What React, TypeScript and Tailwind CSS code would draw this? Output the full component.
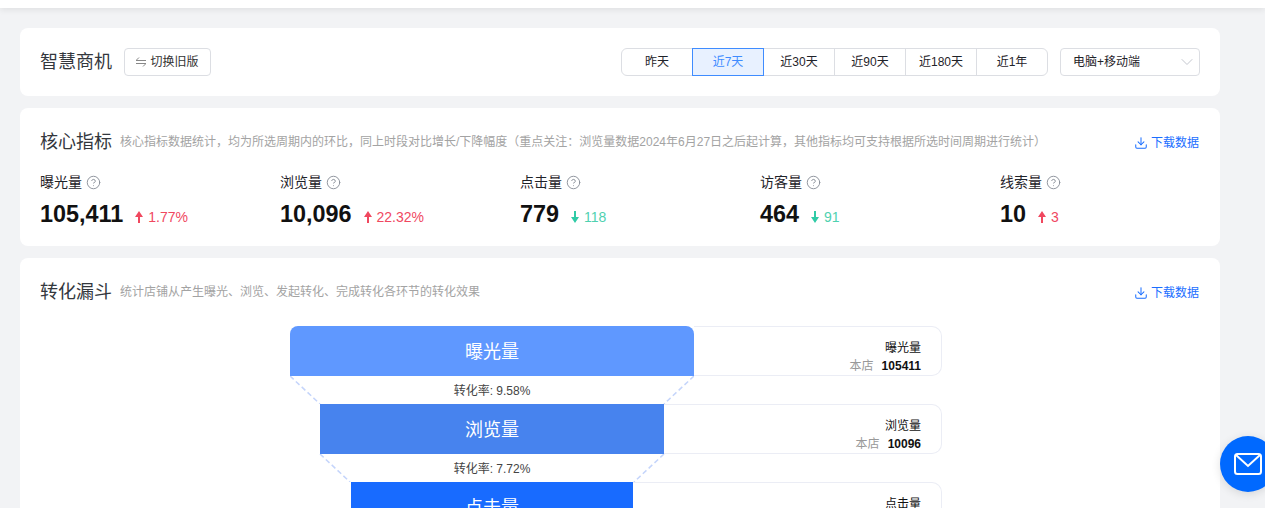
import { ChevronDown, CircleHelp, Download } from 'lucide-react';

const ranges = ['昨天', '近7天', '近30天', '近90天', '近180天', '近1年'];

const metrics = [
  { label: '曝光量', value: '105,411', delta: '1.77%', up: true },
  { label: '浏览量', value: '10,096', delta: '22.32%', up: true },
  { label: '点击量', value: '779', delta: '118', up: false },
  { label: '访客量', value: '464', delta: '91', up: false },
  { label: '线索量', value: '10', delta: '3', up: true },
];

function Arrow({ up }: { up: boolean }) {
  return (
    <svg width="8" height="12" viewBox="0 0 8 12" className={up ? 'text-[#f0485f]' : 'rotate-180 text-[#2fcba6]'}>
      <path d="M4 0 L8 6 H5 V12 H3 V6 H0 Z" fill="currentColor" />
    </svg>
  );
}

function DownloadLink() {
  return (
    <a className="mt-0.5 mr-px flex items-center gap-[3px] text-xs text-[#1a6eff]">
      <Download size={14} strokeWidth={1.75} />
      下载数据
    </a>
  );
}

function CardTitle({ title, desc }: { title: string; desc: string }) {
  return (
    <div className="flex items-center justify-between">
      <div className="flex items-center gap-2">
        <h2 className="text-lg leading-6 font-normal text-[#33373d]">{title}</h2>
        <p className="text-xs text-[#a3a3a3]">{desc}</p>
      </div>
      <DownloadLink />
    </div>
  );
}

function Connector({ rate, inset }: { rate: string; inset: number }) {
  return (
    <div className="relative flex h-7 w-[404px] items-start justify-center pt-[7px] text-xs leading-4 text-[#444444]">
      <svg width="404" height="28" className="absolute top-0 left-0">
        <path d={`M${inset} 0 L${inset + 30} 28 M${404 - inset} 0 L${374 - inset} 28`} stroke="#c5d5fb" strokeWidth="1.5" strokeDasharray="5 3" fill="none" />
      </svg>
      <span className="relative">转化率: {rate}</span>
    </div>
  );
}

function FunnelRow(props: { name: string; store: string; color: string; left: string; width: string; top?: boolean }) {
  return (
    <div className="flex h-[50px] w-[652px]">
      <div className={`${props.left} ${props.width} ${props.color} ${props.top ? 'rounded-t-lg' : ''} flex shrink-0 items-center justify-center pt-0.5 text-lg text-white`}>
        {props.name}
      </div>
      <div className="flex flex-1 flex-col items-end justify-end rounded-r-[10px] border-y border-r border-[#ebedf5] pr-5 text-xs leading-[18px] text-[#111111]">
        <span>{props.name}</span>
        <span>
          <span className="mr-2 text-[#999999]">本店</span>
          <b className="font-bold">{props.store}</b>
        </span>
      </div>
    </div>
  );
}

export default function App() {
  return (
    <div className="relative h-[508px] overflow-hidden bg-[#f2f3f5] font-['Liberation_Sans','Noto_Sans_CJK_SC',sans-serif]">
      <div className="h-2 bg-white shadow-[0_2px_6px_rgba(0,0,0,0.08)]" />
      <div className="ml-5 flex w-[1200px] flex-col gap-3 pt-5">
        <div className="flex h-[68px] items-center justify-between rounded-lg bg-white px-5">
          <div className="flex items-center gap-3">
            <h1 className="text-lg font-normal text-[#33373d]">智慧商机</h1>
            <button className="flex h-7 w-[87px] items-center justify-center gap-1 rounded border border-[#dcdee3] text-xs text-[#333333]">
              <svg width="10" height="10" viewBox="0 0 10 10" fill="none" stroke="#888888" strokeWidth="1">
                <path d="M10 3.5 H0 L3 0.5 M0 6.5 H10 L7 9.5" />
              </svg>
              切换旧版
            </button>
          </div>
          <div className="flex items-center gap-3">
            <div className="flex h-7 w-[427px] rounded-md border border-[#dcdee3] text-xs text-[#1f2329]">
              {ranges.map((r, i) => (
                <div
                  key={r}
                  className={
                    i === 1
                      ? '-my-px flex flex-1 items-center justify-center border border-[#3f8cff] bg-[#e8f1ff] text-[#3f8cff]'
                      : i === 0 || i === 2
                        ? 'flex flex-1 items-center justify-center'
                        : 'flex flex-1 items-center justify-center border-l border-[#dcdee3]'
                  }
                >
                  {r}
                </div>
              ))}
            </div>
            <div className="flex h-7 w-[140px] items-center justify-between rounded border border-[#dcdee3] pr-0.5 pl-3 text-xs text-[#1f2329]">
              电脑+移动端
              <ChevronDown size={20} strokeWidth={1.2} className="text-[#c4c7cf]" />
            </div>
          </div>
        </div>

        <div className="h-[138px] rounded-lg bg-white px-5 pt-[22px]">
          <CardTitle
            title="核心指标"
            desc="核心指标数据统计，均为所选周期内的环比，同上时段对比增长/下降幅度（重点关注：浏览量数据2024年6月27日之后起计算，其他指标均可支持根据所选时间周期进行统计）"
          />
          <div className="mt-[18px] grid grid-cols-[repeat(5,240px)]">
            {metrics.map((m) => (
              <div key={m.label}>
                <div className="flex items-center gap-1 text-sm leading-5 text-[#1f2329]">
                  {m.label}
                  <CircleHelp size={15} strokeWidth={1.5} className="text-[#8a8f99]" />
                </div>
                <div className="mt-2 flex items-center gap-3">
                  <span className="text-[23.4px] leading-7 font-bold text-[#111111]">{m.value}</span>
                  <span className={`mt-1.5 flex items-center gap-[5px] text-sm ${m.up ? 'text-[#f0485f]' : 'text-[#4fd1b0]'}`}>
                    <Arrow up={m.up} />
                    {m.delta}
                  </span>
                </div>
              </div>
            ))}
          </div>
        </div>

        <div className="flex-1 rounded-lg bg-white px-5 pt-[22px]">
          <CardTitle title="转化漏斗" desc="统计店铺从产生曝光、浏览、发起转化、完成转化各环节的转化效果" />
          <div className="mt-[22px] ml-[250px] flex flex-col">
            <FunnelRow name="曝光量" store="105411" color="bg-[#5f98ff]" left="ml-0" width="w-[404px]" top />
            <Connector rate="9.58%" inset={0} />
            <FunnelRow name="浏览量" store="10096" color="bg-[#4783ee]" left="ml-[30px]" width="w-[344px]" />
            <Connector rate="7.72%" inset={30} />
            <FunnelRow name="点击量" store="779" color="bg-[#186bff]" left="ml-[61px]" width="w-[282px]" />
          </div>
        </div>
      </div>

      <div className="absolute top-[436px] left-[1220px] flex h-14 w-14 items-center justify-center rounded-full bg-[#0069ff] shadow-[0_2px_10px_rgba(0,0,0,0.12)]">
        <svg width="28" height="22" viewBox="0 0 28 22" fill="none" stroke="white" strokeWidth="2">
          <rect x="1" y="1" width="26" height="20" rx="2.5" />
          <path d="M2 2 L14 13 L26 2" />
        </svg>
      </div>
    </div>
  );
}
